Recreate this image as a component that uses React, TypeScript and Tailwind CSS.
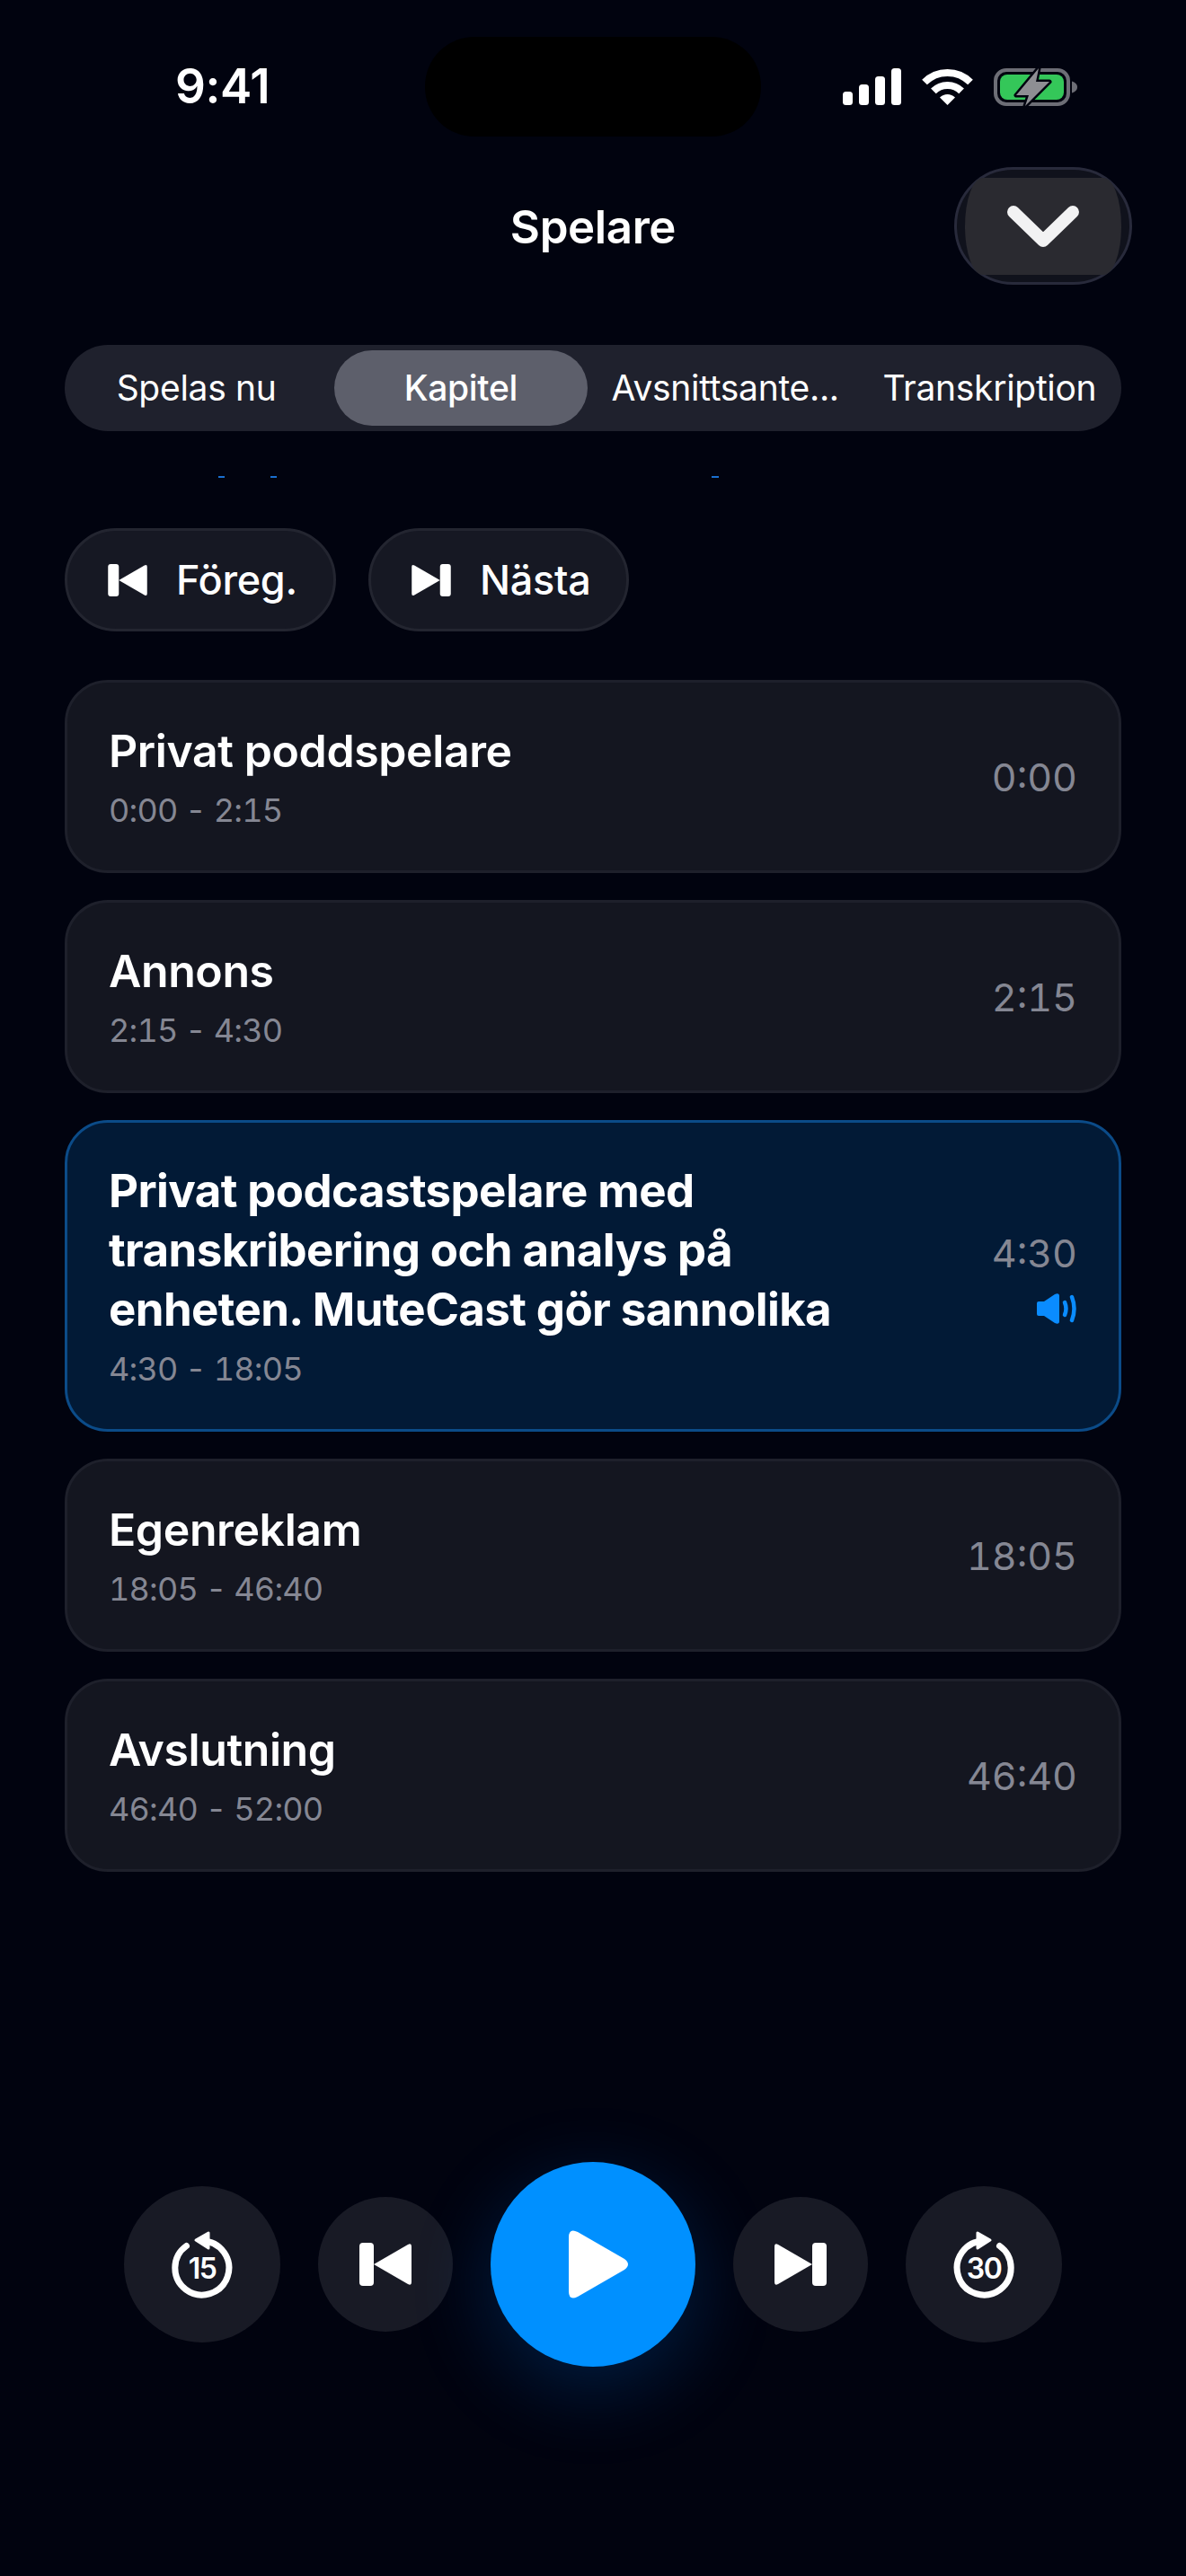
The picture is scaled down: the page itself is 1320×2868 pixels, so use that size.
import React from 'react';

const chapters = [
  { title: 'Privat poddspelare', range: '0:00 - 2:15', time: '0:00' },
  { title: 'Annons', range: '2:15 - 4:30', time: '2:15' },
  {
    title: 'Privat podcastspelare med transkribering och analys på enheten. MuteCast gör sannolika',
    range: '4:30 - 18:05',
    time: '4:30',
    active: true,
  },
  { title: 'Egenreklam', range: '18:05 - 46:40', time: '18:05' },
  { title: 'Avslutning', range: '46:40 - 52:00', time: '46:40' },
];

const tabs = ['Spelas nu', 'Kapitel', 'Avsnittsante...', 'Transkription'];

function SignalIcon() {
  return (
    <svg width="65" height="41" viewBox="0 0 65 41" fill="#fff">
      <rect x="0" y="26" width="11" height="15" rx="3.5" />
      <rect x="18" y="18" width="11" height="23" rx="3.5" />
      <rect x="36" y="9" width="11" height="32" rx="3.5" />
      <rect x="54" y="0" width="11" height="41" rx="3.5" />
    </svg>
  );
}

function WifiIcon() {
  return (
    <svg width="57" height="41" viewBox="0 0 57 41" fill="none" stroke="#fff" strokeWidth="8">
      <path d="M3 15.5A36 36 0 0 1 54 15.5" />
      <path d="M12.9 25.4A22 22 0 0 1 44.1 25.4" />
      <path d="M28.5 41L20 32.5A12 12 0 0 1 37 32.5Z" fill="#fff" stroke="none" />
    </svg>
  );
}

function BatteryIcon() {
  return (
    <svg width="93" height="44" viewBox="0 0 93 44" fill="none">
      <rect x="2" y="3" width="81" height="38" rx="12" stroke="#6d6e76" strokeWidth="4" />
      <rect x="7" y="8" width="71" height="28" rx="8" fill="#34c759" />
      <path d="M87 15.5c3.5 1 6 3.400 6 6.500s-2.500 5.500-6 6.500Z" fill="#6d6e76" />
      <path
        d="M50 1L25 31H39L35 43L62 16H47Z"
        fill="#8e8e93"
        stroke="#01030f"
        strokeWidth="5"
        strokeLinejoin="round"
        paintOrder="stroke"
      />
    </svg>
  );
}

function PrevIcon({ className }: { className: string }) {
  return (
    <svg className={className} viewBox="0 0 58 48" fill="#fff">
      <rect x="0" y="0" width="16" height="48" rx="4" />
      <path d="M16 24L54 2Q58 0 58 4V44Q58 48 54 46Z" />
    </svg>
  );
}

function NextIcon({ className }: { className: string }) {
  return (
    <svg className={className} viewBox="0 0 58 48" fill="#fff">
      <rect x="42" y="0" width="16" height="48" rx="4" />
      <path d="M42 24L4 2Q0 0 0 4V44Q0 48 4 46Z" />
    </svg>
  );
}

function SkipIcon({ label, forward }: { label: string; forward?: boolean }) {
  return (
    <svg width="80" height="80" viewBox="0 0 80 80" fill="none">
      <g transform={forward ? 'matrix(-1 0 0 1 80 0)' : undefined}>
        <path
          d="M40 14A30 30 0 1 1 22.500 19.500"
          stroke="#fff"
          strokeWidth="7"
          strokeLinecap="round"
        />
        <path d="M33 13L47 5V22Z" fill="#fff" stroke="#fff" strokeWidth="3" strokeLinejoin="round" />
      </g>
      <text x="40" y="56" textAnchor="middle" fill="#fff" fontSize="32" fontWeight="600" letterSpacing="-1.5">
        {label}
      </text>
    </svg>
  );
}

function SpeakerIcon() {
  return (
    <svg width="46" height="34" viewBox="0 0 46 34" fill="none">
      <path
        d="M1 11Q1 9 3 9H9L21 1Q26 -1 26 3V31Q26 35 21 33L9 25H3Q1 25 1 23Z"
        fill="#0a8cff"
      />
      <path d="M32 10Q35 17 32 24" stroke="#0a8cff" strokeWidth="4.500" strokeLinecap="round" />
      <path d="M40 4Q45 17 40 30" stroke="#0a8cff" strokeWidth="4.500" strokeLinecap="round" />
    </svg>
  );
}

export default function App() {
  return (
    <div className="w-[1320px] h-[2868px] overflow-hidden pt-[41px] bg-[#01030f] text-white font-['Inter',sans-serif]">
      {/* status bar */}
      <div className="flex items-center h-[111px] pl-[195px]">
        <div className="w-[278px] text-[53px] font-semibold leading-none tracking-[-0.4px]">9:41</div>
        <div className="w-[374px] h-[111px] rounded-[55px] bg-black" />
        <div className="ml-[91px] flex items-center gap-[23px]">
          <SignalIcon />
          <WifiIcon />
          <BatteryIcon />
        </div>
      </div>

      {/* header */}
      <div className="flex items-center h-[131px] mt-[34px]">
        <div className="w-[258px]" />
        <div className="flex-1 pt-[3px] text-center text-[51px] font-semibold tracking-[-0.4px]">Spelare</div>
        <div className="mr-[60px] w-[198px] h-[131px] rounded-full border-[3px] border-[#282a3b] bg-[#10121c] flex items-center justify-center">
          <div className="w-[174px] h-[108px] rounded-[20px/54px] bg-[#2a2a30] flex items-center justify-center">
            <svg width="80" height="46" viewBox="0 0 80 46" fill="none">
              <path d="M7 7L40 39L73 7" stroke="#f2f2f3" strokeWidth="14" strokeLinecap="round" strokeLinejoin="round" />
            </svg>
          </div>
        </div>
      </div>

      {/* tabs */}
      <div className="mx-[72px] mt-[67px] h-[96px] rounded-full bg-[#1f212d] p-[6px] flex gap-[13px]">
        {tabs.map((tab) => (
          <div
            key={tab}
            className={`flex-1 flex items-center justify-center rounded-full text-[39px] tracking-[-0.3px] whitespace-nowrap ${
              tab === 'Kapitel' ? 'bg-[#5d5f6b] font-medium' : 'font-normal'
            }`}
          >
            {tab}
          </div>
        ))}
      </div>

      {/* clipped text above the list */}
      <div className="flex h-[2px] mt-[50px] pl-[243px]">
        <div className="w-[7px] bg-[#1a6fd0]" />
        <div className="w-[7px] ml-[51px] bg-[#1a6fd0]" />
        <div className="w-[8px] ml-[484px] bg-[#1a6fd0]" />
      </div>

      {/* chapter nav */}
      <div className="flex gap-[36px] mx-[72px] mt-[56px]">
        <div className="h-[115px] w-[302px] pl-[45px] flex items-center gap-[32px] rounded-full border-[3px] border-[#232530] bg-[#161823]">
          <PrevIcon className="w-[44px] h-[36px]" />
          <span className="text-[45px] font-medium tracking-[-0.3px]">Föreg.</span>
        </div>
        <div className="h-[115px] w-[290px] pl-[45px] flex items-center gap-[32px] rounded-full border-[3px] border-[#232530] bg-[#161823]">
          <NextIcon className="w-[44px] h-[36px]" />
          <span className="text-[45px] font-medium tracking-[-0.3px]">Nästa</span>
        </div>
      </div>

      {/* chapters */}
      <div className="flex flex-col gap-[30px] mx-[72px] mt-[54px]">
        {chapters.map((c) => (
          <div
            key={c.time}
            className={`flex items-center justify-between rounded-[48px] border-[3px] pl-[46px] pr-[46px] py-[43px] ${
              c.active ? 'border-[#0b4b88] bg-[#021a36]' : 'border-[#1e202b] bg-[#141620]'
            }`}
          >
            <div className="w-[860px]">
              <div className={`leading-[66px] ${c.active ? 'text-[51px] font-bold tracking-[-0.6px]' : 'text-[50px] font-semibold tracking-[-0.4px]'}`}>
                {c.title}
              </div>
              <div className="mt-[9px] text-[36px] leading-[48px] tabular-nums tracking-[-0.8px] text-[#858793]">{c.range}</div>
            </div>
            <div className="flex flex-col items-end gap-[18px]">
              <div className="text-[43px] leading-[54px] tabular-nums text-[#858793]">{c.time}</div>
              {c.active && <SpeakerIcon />}
            </div>
          </div>
        ))}
      </div>

      {/* playback controls */}
      <div className="flex items-center justify-center gap-[42px] mt-[323px]">
        <div className="w-[174px] h-[174px] rounded-full bg-[#181a25] flex items-center justify-center">
          <SkipIcon label="15" />
        </div>
        <div className="w-[150px] h-[150px] rounded-full bg-[#181a25] flex items-center justify-center">
          <PrevIcon className="w-[58px] h-[48px]" />
        </div>
        <div className="w-[228px] h-[228px] rounded-full bg-[#0090ff] shadow-[0_24px_90px_rgba(0,128,255,0.22)] flex items-center justify-center">
          <svg width="67" height="76" viewBox="0 0 67 76" fill="#fff" className="ml-[12px]">
            <path d="M0 8Q0 -3 10 2L62 32Q70 38 62 44L10 74Q0 79 0 68Z" />
          </svg>
        </div>
        <div className="w-[150px] h-[150px] rounded-full bg-[#181a25] flex items-center justify-center">
          <NextIcon className="w-[58px] h-[48px]" />
        </div>
        <div className="w-[174px] h-[174px] rounded-full bg-[#181a25] flex items-center justify-center">
          <SkipIcon label="30" forward />
        </div>
      </div>
    </div>
  );
}
